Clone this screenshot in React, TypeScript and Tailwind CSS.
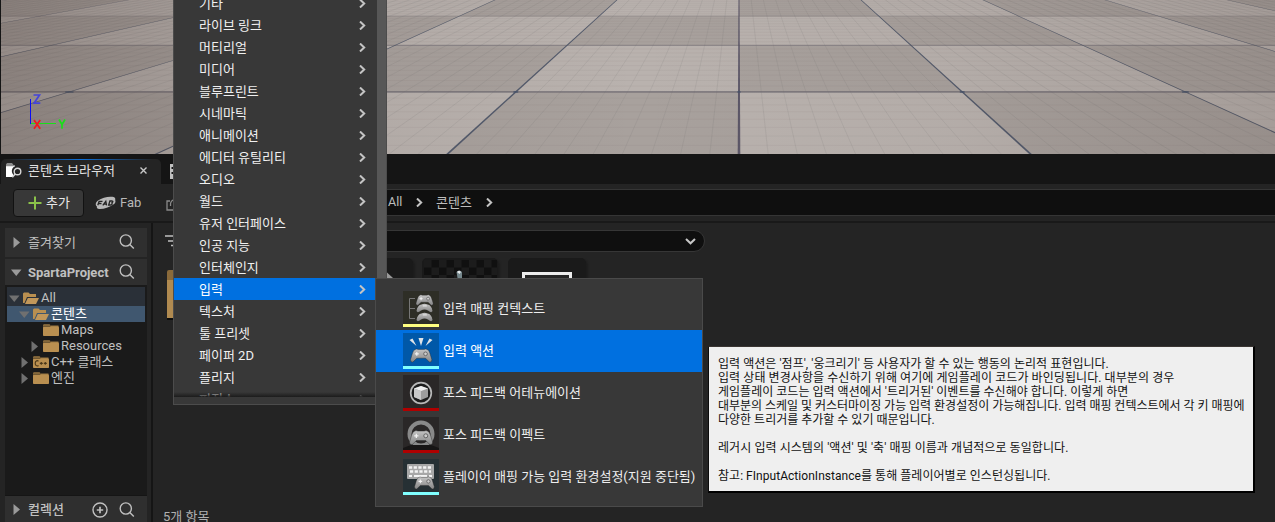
import React from "react";

const FONT = "font-['Roboto','Noto_Sans_CJK_KR',sans-serif]";

const CX = 739;
const HORIZON = -111;
const SLOPE = 1.1;
const rowY = (n: number) => 1 / (0.00448 + n * 0.001335) / SLOPE + HORIZON;
const colX = (k: number, y: number) => CX + k * SLOPE * (y - HORIZON);

function Viewport() {
  const tiles: React.ReactElement[] = [];
  for (let r = -1; r <= 3; r++) {
    const y1 = rowY(r);
    const y0 = rowY(r + 1);
    for (let k = -8; k < 8; k++) {
      const light = (((r + k) % 2) + 2) % 2 === 1;
      tiles.push(
        <polygon
          key={`${r}-${k}`}
          fill={light ? "#b9b2ae" : "#a8a19d"}
          points={`${colX(k, y0)},${y0} ${colX(k + 1, y0)},${y0} ${colX(k + 1, y1)},${y1} ${colX(k, y1)},${y1}`}
        />,
      );
    }
  }
  const fineCols = Array.from({ length: 141 }, (_, i) => (i - 70) / 10);
  const fineRows = Array.from({ length: 45 }, (_, i) => (i - 10) / 10);
  const cols = Array.from({ length: 15 }, (_, i) => i - 7);
  return (
    <svg className="block h-[154px] w-full shrink-0" viewBox="0 0 1275 154" preserveAspectRatio="none">
      <defs>
        <linearGradient id="shadeX" x1="0" x2="1" y1="0" y2="0">
          <stop offset="0" stopColor="#4a3c38" stopOpacity="0.32" />
          <stop offset="0.3" stopColor="#4a3c38" stopOpacity="0.06" />
          <stop offset="0.5" stopColor="#4a3c38" stopOpacity="0" />
          <stop offset="0.75" stopColor="#4a3c38" stopOpacity="0.05" />
          <stop offset="1" stopColor="#4a3c38" stopOpacity="0.18" />
        </linearGradient>
      </defs>
      <rect width="1275" height="154" fill="#aca5a1" />
      {tiles}
      {fineCols.map((k) => (
        <line key={k} x1={colX(k, -2)} y1={-2} x2={colX(k, 156)} y2={156} stroke="#6b6568" strokeOpacity="0.16" strokeWidth="0.8" />
      ))}
      {fineRows.map((n) => (
        <line key={n} x1={0} x2={1275} y1={rowY(n)} y2={rowY(n)} stroke="#6b6568" strokeOpacity="0.09" strokeWidth="0.8" />
      ))}
      {[0, 1, 2].map((n) => (
        <line key={n} x1={0} x2={1275} y1={rowY(n)} y2={rowY(n)} stroke="#6d6970" strokeOpacity={0.7 - n * 0.22} strokeWidth={1.7 - n * 0.3} />
      ))}
      {cols.map((k) => (
        <polygon
          key={k}
          fill={k === 0 ? "#514c60" : "#475064"}
          fillOpacity="0.88"
          points={`${colX(k, 0) - 0.5},0 ${colX(k, 0) + 0.5},0 ${colX(k, 154) + 1.3},154 ${colX(k, 154) - 1.3},154`}
        />
      ))}
      {cols.map((k) => (
        <ellipse key={k} cx={colX(k, rowY(0))} cy={rowY(0)} rx={1.8 + Math.abs(k) * 0.9} ry="0.9" fill="#47536b" fillOpacity="0.85" />
      ))}
      <rect width="1275" height="154" fill="url(#shadeX)" />
      <rect width="1" height="154" fill="#151515" />
      <path d="M30.5 99v25" stroke="#0a0af5" strokeWidth="1" />
      <path d="M31 123.5h25" stroke="#18e018" strokeWidth="1" />
      <path d="M33.500 95h6L34 103.200h6.300" stroke="#4545d8" strokeWidth="1.700" fill="none" />
      <path d="M34 120l6.200 8.800M40.200 120l-6.200 8.800" stroke="#f01a1a" strokeWidth="1.800" />
      <path d="M59 119.500l3 5 3-5M62 124v4.800" stroke="#18e018" strokeWidth="1.700" fill="none" />
    </svg>
  );
}

function Search() {
  return (
    <svg className="size-4 shrink-0" viewBox="0 0 16 16" fill="none" stroke="#c0c0c0" strokeWidth="1.4">
      <circle cx="6.800" cy="6.500" r="5.600" />
      <path d="M10.800 10.500l4 4" />
    </svg>
  );
}

function Arrow({ open, dim }: { open?: boolean; dim?: boolean }) {
  return (
    <svg className="h-[11px] w-[11px] shrink-0" viewBox="0 0 11 11">
      <path d={open ? "M0 2.500h10.500L5.250 9z" : "M2.500 0v11L9 5.500z"} fill={dim ? "#707070" : "#9a9a9a"} />
    </svg>
  );
}

function Folder({ kind }: { kind?: "open" | "cpp" }) {
  return (
    <svg className="h-3 w-4 shrink-0" viewBox="0 0 16 12">
      {kind === "open" ? (
        <>
          <path d="M0 11V1.500L1 .500h4.500l1.500 1.500h6V5H4L1.500 11z" fill="#b98f50" />
          <path d="M4.800 6H16l-3 6H2z" fill="#c1975a" />
        </>
      ) : (
        <>
          <path d="M0 1l.8-.8h5.700L8 1.500h7.500V3H0z" fill="#9b7843" />
          <rect y="2.500" width="16" height="9.500" rx=".8" fill="#b98f50" />
          <path d="M0 2.200h7l1-.9" stroke="#332a1c" strokeWidth=".7" fill="none" />
          {kind === "cpp" && (
            <path d="M5.500 5.200C4 4 2.200 5 2.200 7.200S4 10.600 5.500 9.500M6.800 7.400h3M8.300 6v2.800M10.800 7.400h3M12.300 6v2.800" stroke="#4a3718" strokeWidth="1.100" fill="none" />
          )}
        </>
      )}
    </svg>
  );
}

function Chevron() {
  return (
    <svg className="h-[9px] w-[7px] shrink-0" viewBox="0 0 7 9" fill="none" stroke="#c4c4c4" strokeWidth="2">
      <path d="M1 .500l4.200 4L1 8.500" />
    </svg>
  );
}

function TabBar() {
  return (
    <div className="flex h-[30px] shrink-0 items-end bg-[#151515] pl-px">
      <div className="relative flex h-[25px] w-[160px] items-center rounded-t-[5px] bg-[#242424] pb-[2px] pl-[5px]">
        <div className="absolute top-0 left-2 h-px w-[144px] bg-gradient-to-r from-transparent via-[#0e6fd8] to-transparent" />
        <svg className="mr-[6px] h-[15px] w-4 shrink-0" viewBox="0 0 16 15" fill="none">
          <path d="M0 1.500L1 0h5l1.500 2H9v2H0z" fill="#8d8d8d" />
          <path d="M0 3.300h8.500C5.500 5.500 5 9 7.500 12l-1 2H0z" fill="#fff" />
          <circle cx="11.500" cy="8.500" r="3.300" stroke="#d6d6d6" strokeWidth="1.400" />
          <path d="M9.300 11L6.300 14.300" stroke="#d6d6d6" strokeWidth="1.500" />
        </svg>
        <span className="w-[110px] text-[13px] leading-none whitespace-nowrap text-[#e0e0e0]">콘텐츠 브라우저</span>
        <svg className="ml-[2px] size-[7px]" viewBox="0 0 7 7" stroke="#c8c8c8" strokeWidth="1.400">
          <path d="M.5.500l6 6M6.500.500l-6 6" />
        </svg>
      </div>
      <svg className="mb-[5px] ml-[9px] h-[15px] w-4" viewBox="0 0 16 15">
        <path d="M0 0h16v15H0z" fill="#c0c0c0" />
        <path d="M1.500 3h3v2h-3zM1.500 8h3v2h-3z" fill="#151515" />
      </svg>
    </div>
  );
}

function Toolbar() {
  return (
    <div className="flex h-[39px] shrink-0 border-b-2 border-[#191919] bg-[#242424] pt-[5px] pl-[13px]">
      <div className="flex h-[28px] w-[71px] shrink-0 items-center rounded-[4px] border border-[#121212] bg-[#383838] pl-[14px]">
        <svg className="mr-[4px] size-[14px] shrink-0" viewBox="0 0 14 14" stroke="#8bc24a" strokeWidth="2">
          <path d="M7 .500v13M.500 7h13" />
        </svg>
        <span className="pb-px text-[13px] leading-none text-[#e8e8e8]">추가</span>
      </div>
      <div className="ml-[11px] flex h-[27px] w-[60px] shrink-0 items-center">
        <svg className="h-[14px] w-[21px] shrink-0" viewBox="0 0 21 14">
          <path d="M3 4.500C7 1.500 13 .300 17.500.800c3 .600 3 2.200 2.700 3.200.8 2-.2 4-2.700 5-3 2.200-8 4-12.500 4C2 13 1.500 11.500 2 10.500 0 9.500.5 6 3 4.500z" fill="#b8b8b8" />
          <path d="M2.800 9.300l1.300-4h3.400M3.500 7.500h3M7.800 9.300l3-4 .8 4M9 8.200h2.500M13.700 9l1.200-4h2c1.500 0 1.200 1.800-.6 1.900 1.600.1 1 2.100-.8 2.100z" stroke="#242424" strokeWidth="1.300" fill="none" />
        </svg>
        <span className="ml-[4px] text-[13px] leading-none text-[#b8b8b8]">Fab</span>
      </div>
      <svg className="mt-[7px] ml-[11px] size-[15px] shrink-0" viewBox="0 0 15 15" fill="none" stroke="#8a8a8a" strokeWidth="1.300">
        <path d="M4 5H1v9h13V9M4.500 10C4 5.500 6 3.500 10 3.500M8 1l3 2.500L8 6" />
      </svg>
      <div className="ml-[7px] flex h-[27px] min-w-0 flex-1 items-center border border-r-0 border-[#353535] bg-[#0f0f0f] pl-[199px] text-[13px] leading-none text-[#bdbdbd]">
        <span className="w-[28px] text-[12.500px]">All</span>
        <Chevron />
        <span className="ml-[13px] w-[50px] text-[13px]">콘텐츠</span>
        <Chevron />
      </div>
    </div>
  );
}

function TreeRow({ label, indent, arrow, kind, tone }: { label: string; indent: string; arrow?: "open" | "closed"; kind?: "open" | "cpp"; tone?: string }) {
  return (
    <div className={`flex h-4 items-center text-[13px] leading-none whitespace-nowrap text-[#c0c0c0] ${indent} ${tone ?? ""}`}>
      <span className="flex w-[14px] shrink-0">{arrow && <Arrow dim open={arrow === "open"} />}</span>
      <Folder kind={kind} />
      <span className="ml-[2px] pb-[2px]">{label}</span>
    </div>
  );
}

function Sidebar() {
  return (
    <div className="flex w-[153px] shrink-0 flex-col border-r-2 border-[#151515] bg-[#242424] pt-[5px] pr-1 pl-[5px]">
      <div className="flex h-[29px] shrink-0 items-center bg-[#2f2f2f] pb-px pl-[6px] text-[13px] leading-none text-[#c0c0c0]">
        <Arrow />
        <span className="ml-[6px] w-[91px]">즐겨찾기</span>
        <Search />
      </div>
      <div className="mt-0.5 flex h-[26px] shrink-0 items-center bg-[#2f2f2f] pl-[6px] text-[13px] leading-none text-[#c0c0c0]">
        <Arrow open />
        <span className="ml-[6px] w-[91px] font-bold">SpartaProject</span>
        <Search />
      </div>
      <div className="flex min-h-0 flex-1 flex-col bg-[#1a1a1a] pt-[2px] pr-[2px] pl-[2px]">
        <div className="bg-[#2a3038] pt-[3px]">
          <TreeRow label="All" indent="pl-[2px]" arrow="open" kind="open" />
        </div>
        <TreeRow label="콘텐츠" indent="pl-[12px]" arrow="open" kind="open" tone="bg-[#40576f] text-white" />
        <TreeRow label="Maps" indent="pl-[22px]" />
        <TreeRow label="Resources" indent="pl-[22px]" arrow="closed" />
        <TreeRow label="C++ 클래스" indent="pl-[12px]" arrow="closed" kind="cpp" />
        <TreeRow label="엔진" indent="pl-[12px]" arrow="closed" />
      </div>
      <div className="flex h-[27px] shrink-0 items-center border-t border-[#151515] bg-[#2f2f2f] pt-px pl-[6px] text-[13px] leading-none text-[#c0c0c0]">
        <Arrow />
        <span className="ml-[6px] w-[64px] font-medium">컬렉션</span>
        <svg className="mr-[11px] size-4" viewBox="0 0 16 16" fill="none" stroke="#c0c0c0" strokeWidth="1.400">
          <circle cx="8" cy="8" r="7" />
          <path d="M8 4.800v6.400M4.800 8h6.400" strokeWidth="1.700" />
        </svg>
        <Search />
      </div>
    </div>
  );
}

function Assets() {
  return (
    <div className="flex min-w-0 flex-1 flex-col bg-[#242424] pt-[7px]">
      <div className="flex h-[22px] shrink-0 items-center pl-[12px]">
        <svg className="h-[12px] w-[17px]" viewBox="0 0 17 12" stroke="#c0c0c0" strokeWidth="1.600">
          <path d="M0 1h17M3 6h11M6 10.500h5" />
        </svg>
        <div className="ml-[13px] flex h-[22px] w-[510px] items-center justify-end rounded-full border border-[#363636] bg-[#0f0f0f] pr-[8px]">
          <svg className="h-[7px] w-[11px]" viewBox="0 0 11 7" fill="none" stroke="#c8c8c8" strokeWidth="2">
            <path d="M1 1l4.500 4.300L10 1" />
          </svg>
        </div>
      </div>
      <div className="mt-[6px] flex h-[250px] shrink-0 items-start pl-[14px]">
        <svg className="mt-[12px] h-[50px] w-[78px]" viewBox="0 0 78 50">
          <path d="M0 2q0-2 2-2h24l5 7h47v41H0z" fill="#8a6a3a" />
          <path d="M0 10h78v38H0z" fill="#b08a50" />
          <path d="M0 48h78v2H0z" fill="#0c0c0c" />
        </svg>
        <div className="ml-[91px] flex h-[110px] w-[77px] rounded-[5px] bg-[#1a1a1a] shadow-[2px_2px_2px_#1d1d1d]">
          <svg className="ml-[45px] h-5 w-[24px]" viewBox="0 0 24 20">
            <path d="M0 9l12 11H0z" fill="#9a9a9a" />
          </svg>
        </div>
        <div className="ml-[9px] h-[110px] w-[76px] rounded-[5px] bg-[#1a1a1a] pt-[2px] pl-[2px] shadow-[2px_2px_2px_#1d1d1d]">
          <svg className="h-[30px] w-[73px]" viewBox="0 0 73 30">
            <rect width="73" height="30" fill="#1c1c1c" />
            {Array.from({ length: 20 }, (_, i) => (
              <rect key={i} x={(i % 5) * 15 + (Math.floor(i / 5) % 2 === 0 ? 7.5 : 0)} y={Math.floor(i / 5) * 7.5} width="7.500" height="7.500" fill="#101010" />
            ))}
            <path d="M32.500 12q3-3 5.500 0v9h-4z" fill="#75878c" />
            <path d="M33 12q2-2.500 4 0l-1.500 2z" fill="#e3e8ea" />
          </svg>
        </div>
        <div className="ml-[10px] h-[110px] w-[78px] rounded-[5px] bg-[#1a1a1a] pt-[14px] pl-[14px] shadow-[2px_2px_2px_#1d1d1d]">
          <div className="h-8 w-[50px] border-[3px] border-[#ececec] bg-[#242424]" />
        </div>
      </div>
      <span className="mt-[2px] ml-[10px] text-[13px] leading-[14px] whitespace-nowrap text-[#b0b0b0]">5개 항목</span>
    </div>
  );
}

const MENU = ["기타", "라이브 링크", "머티리얼", "미디어", "블루프린트", "시네마틱", "애니메이션", "에디터 유틸리티", "오디오", "월드", "유저 인터페이스", "인공 지능", "인터체인지", "입력", "텍스처", "툴 프리셋", "페이퍼 2D", "플리지", "피직스"];

function Menu() {
  return (
    <div className="absolute top-0 left-[173px] flex h-[405px] w-[214px] border-x border-b border-[#4c4c4c] bg-[#383838]">
      <div className="relative h-[397px] flex-1 overflow-hidden">
        <div className="-mt-2 flex flex-col">
          {MENU.map((m) => (
            <div key={m} className={`flex h-[22px] shrink-0 items-center justify-between pr-[11px] pl-[25px] text-[13px] leading-none whitespace-nowrap ${m === "입력" ? "bg-[#0070e0] text-white" : "text-[#f0f0f0]"}`}>
              <span>{m}</span>
              <Chevron />
            </div>
          ))}
        </div>
        <div className="absolute inset-x-0 bottom-0 h-[5px] bg-gradient-to-t from-[#1c1c1c] to-transparent" />
      </div>
      <div className="h-[397px] w-[9px] bg-[#575757]" />
    </div>
  );
}

function Pad({ x, y, s = 1 }: { x: number; y: number; s?: number }) {
  return (
    <g transform={`translate(${x} ${y}) scale(${s})`}>
      <path d="M5 1.500Q6 .500 8 1.500h6q2-1 3 0 2 .500 2.800 3.500L22 12q0 3-2.500 2.500L15.500 10.500h-9L2.500 14.500Q0 15 0 12L2.200 5Q3 2 5 1.500z" fill="url(#metal)" stroke="#222" strokeOpacity=".55" strokeWidth=".7" />
      <path d="M6.500 4v4M4.500 6h4" stroke="#f4f4f4" strokeWidth="1.200" />
      <circle cx="15.500" cy="6" r="1.900" fill="#ccc" stroke="#555" strokeWidth=".8" />
    </g>
  );
}

function ActionIcon({ kind }: { kind: number }) {
  const bg = ["#2e2e26", "#0058a8", "#2a2727", "#2a2727", "#263034"][kind];
  const bar = ["#ffff80", "#80ffff", "#b00000", "#b00000", "#80ffff"][kind];
  return (
    <svg className="size-9 shrink-0" viewBox="0 0 36 36">
      <defs>
        <linearGradient id="metal" x1="0" x2="0" y1="0" y2="1">
          <stop offset="0" stopColor="#c4c4c4" />
          <stop offset="1" stopColor="#858585" />
        </linearGradient>
      </defs>
      <rect width="36" height="36" fill={bg} />
      {kind === 0 && (
        <>
          <path d="M12 7.500H6.500v20H12M6.500 17.500H12" stroke="#777" fill="none" />
          {[22, 13].map((y) => (
            <path key={y} d={`M13.500 ${y + 7}q1-6 5-6.500 3-1.500 6 0 4 .5 5 6.500-1 2.500-4.500-.5-3.500-2-7 0-3.500 3-4.500.5z`} fill="url(#metal)" />
          ))}
          <path d="M19.800 14.800h4M19.800 23.800h4" stroke="#e0e0e0" strokeWidth="1.200" />
          <Pad x={13} y={3} s={0.78} />
        </>
      )}
      {kind === 1 && (
        <>
          <path d="M6.500 7l3-1.500 4 7.500zM15.500 5h5L18 13zM26.500 5.500l3 1.500-7 6z" fill="#dfe4e8" />
          <Pad x={7.5} y={15} s={0.97} />
        </>
      )}
      {kind === 2 && (
        <>
          <circle cx="18" cy="18" r="10.300" fill="#1c1c1c" stroke="#b8b8b8" strokeWidth="1.700" />
          <path d="M11 13.500L18 11l7 2.500v8.500L18 25l-7-3z" fill="#9d9d9d" />
          <path d="M11 13.500L18 11l7 2.500L18 16z" fill="#eee" />
          <path d="M11 13.500L18 16v9l-7-3z" fill="#c8c8c8" />
        </>
      )}
      {kind === 3 && (
        <>
          <circle cx="18" cy="17" r="11.500" fill="none" stroke="#898989" strokeWidth="4" />
          <path d="M0 33v-2l8-3h20l8 3v2z" fill="#171515" />
          <Pad x={6.5} y={12.5} s={1.05} />
        </>
      )}
      {kind === 4 && (
        <>
          <rect x="4" y="5" width="27" height="15" rx="1" fill="#a7a7a7" />
          <path d="M6 8.500h23M7 12.500h21" stroke="#f3f3f3" strokeWidth="2.500" strokeDasharray="3.200 1.500" />
          <path d="M6 17h3M11 17h13M26 17h3" stroke="#f3f3f3" strokeWidth="2.200" />
          <Pad x={11.5} y={17} s={0.9} />
        </>
      )}
      <rect y="33" width="36" height="3" fill={bar} />
    </svg>
  );
}

const ACTIONS = ["입력 매핑 컨텍스트", "입력 액션", "포스 피드백 어테뉴에이션", "포스 피드백 이펙트", "플레이어 매핑 가능 입력 환경설정(지원 중단됨)"];

function Submenu() {
  return (
    <div className="absolute top-[278px] left-[375px] flex h-[229px] w-[328px] flex-col border border-[#4a4a4a] bg-[#383838] pt-[9px]">
      {ACTIONS.map((a, i) => (
        <div key={a} className={`flex h-[42px] shrink-0 items-center pl-[27px] text-[13px] leading-none whitespace-nowrap ${i === 1 ? "bg-[#0070e0] text-white" : "text-[#eeeeee]"}`}>
          <ActionIcon kind={i} />
          <span className="ml-1 pb-[2px]">{a}</span>
        </div>
      ))}
    </div>
  );
}

const TIP = [
  { text: "입력 액션은 '점프', '웅크리기' 등 사용자가 할 수 있는 행동의 논리적 표현입니다.", track: "tracking-[0.04px]" },
  { text: "입력 상태 변경사항을 수신하기 위해 여기에 게임플레이 코드가 바인딩됩니다. 대부분의 경우", track: "tracking-[0.08px]" },
  { text: "게임플레이 코드는 입력 액션에서 '트리거된' 이벤트를 수신해야 합니다. 이렇게 하면", track: "tracking-[0.02px]" },
  { text: "대부분의 스케일 및 커스터마이징 가능 입력 환경설정이 가능해집니다. 입력 매핑 컨텍스트에서 각 키 매핑에", track: "tracking-[-0.02px]" },
  { text: "다양한 트리거를 추가할 수 있기 때문입니다.", track: "" },
  { text: "", track: "" },
  { text: "레거시 입력 시스템의 '액션' 및 '축' 매핑 이름과 개념적으로 동일합니다.", track: "tracking-[0.07px]" },
  { text: "", track: "" },
  { text: "참고: FInputActionInstance를 통해 플레이어별로 인스턴싱됩니다.", track: "tracking-[0.04px]" },
];

function Tooltip() {
  return (
    <div className="absolute top-[346px] left-[708px] h-[147px] w-[547px] border-t border-r-2 border-b-2 border-l border-t-[#3a3532] border-r-black border-b-black border-l-[#0c0c0c] bg-[#efefef] pt-[10px] pl-[9px] text-[12px] text-[#111111]">
      {TIP.map((t, i) => (
        <div key={i} className={`h-[14px] leading-[14px] whitespace-nowrap ${t.track}`}>{t.text}</div>
      ))}
    </div>
  );
}

export default function App() {
  return (
    <div className={`relative flex h-[522px] w-[1275px] flex-col overflow-hidden bg-[#151515] ${FONT}`}>
      <Viewport />
      <TabBar />
      <Toolbar />
      <div className="flex h-[299px] shrink-0">
        <Sidebar />
        <Assets />
      </div>
      <Menu />
      <Submenu />
      <Tooltip />
    </div>
  );
}
